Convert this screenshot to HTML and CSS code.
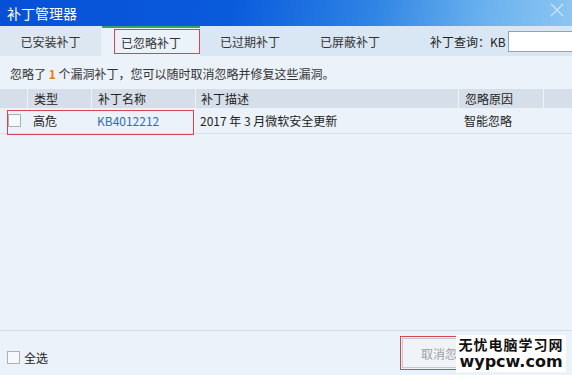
FILE: index.html
```html
<!DOCTYPE html>
<html lang="zh-CN">
<head>
  <meta charset="UTF-8">
  <title>补丁管理器</title>
  <link rel="stylesheet" href="styles.css">
</head>
<body>
  <div class="ventana">
    <div class="titulo">
      <span>补丁管理器</span>
      <svg class="cerrar" width="14" height="14" viewBox="0 0 14 14">
        <path d="M1 1 L13 13 M13 1 L1 13" stroke="#cfe6fb" stroke-width="1.2" fill="none"/>
      </svg>
    </div>

    <div class="pestanas">
      <div class="pestana">已安装补丁</div>
      <div class="pestana activa">已忽略补丁</div>
      <div class="pestana">已过期补丁</div>
      <div class="pestana">已屏蔽补丁</div>
      <div class="buscar">补丁查询：KB<input type="text"></div>
    </div>

    <div class="contenido">
      <p class="aviso">忽略了 <b>1</b> 个漏洞补丁，您可以随时取消忽略并修复这些漏洞。</p>
      <div class="tabla">
        <div class="fila cabecera">
          <div class="c-check"></div>
          <div class="c-tipo">类型</div>
          <div class="c-nombre">补丁名称</div>
          <div class="c-desc">补丁描述</div>
          <div class="c-razon">忽略原因</div>
          <div class="c-resto"></div>
        </div>
        <div class="fila">
          <div class="c-check"><span class="caja"></span></div>
          <div class="c-tipo">高危</div>
          <div class="c-nombre"><a href="#">KB4012212</a></div>
          <div class="c-desc">2017 年 3 月微软安全更新</div>
          <div class="c-razon">智能忽略</div>
          <div class="c-resto"></div>
        </div>
      </div>
    </div>

    <div class="pie">
      <label class="todo"><span class="caja"></span>全选</label>
      <button class="boton">取消忽略</button>
    </div>

    <!-- marcas rojas y marca de agua -->
    <div class="marca m-tab"></div>
    <div class="marca m-fila"></div>
    <div class="marca m-boton"></div>
    <div class="agua">
      <div class="agua-1">无忧电脑学习网</div>
      <div class="agua-2">wypcw.com</div>
    </div>
  </div>
</body>
</html>
```

FILE: styles.css
```css
body {
  margin: 0;
  overflow: hidden;
  font-family: "Noto Sans CJK SC", "Noto Sans", sans-serif;
  font-size: 12px;
  color: #222;
}

.ventana {
  position: relative;
  width: 572px;
  height: 375px;
  background: #ebf2fa;
  display: flex;
  flex-direction: column;
}

.titulo {
  height: 26px;
  display: flex;
  align-items: center;
  justify-content: space-between;
  padding: 0 8px 0 7px;
  color: #fff;
  font-size: 14px;
  background: linear-gradient(100deg, #0650d8 0%, #0a5adc 40%, #2f84e4 65%, #6cb2ee 85%, #8cc6f2 100%);
}

.cerrar {
  margin-top: -6px;
}

.pestanas {
  height: 30px;
  display: flex;
  align-items: stretch;
  background: #d9e6f4;
}

.pestana {
  width: 100px;
  flex-shrink: 0;
  display: flex;
  align-items: center;
  justify-content: center;
  color: #333;
}

.pestana:first-child {
  width: 101px;
  background: #dce7f2;
  border-right: 1px solid #e6eef7;
}

.pestana.activa {
  width: 98px;
  background: #ebf2fa;
  border-top: 2px solid #3ca35a;
}

.buscar {
  margin-left: 30px;
  display: flex;
  align-items: center;
  gap: 2px;
  white-space: nowrap;
  color: #222;
}

.buscar input {
  width: 66px;
  height: 19px;
  margin: 0;
  padding: 0;
  border: 1px solid #8aa3bf;
  background: #fff;
  flex-shrink: 0;
}

.contenido {
  flex: 1;
}

.aviso {
  margin: 0;
  padding: 9px 0 0 10px;
  height: 24px;
  line-height: 18px;
  color: #333;
}

.aviso b {
  color: #f07a00;
}

.tabla {
  display: flex;
  flex-direction: column;
}

.fila {
  display: flex;
  height: 25px;
  align-items: center;
  border-bottom: 1px solid #d7e0ea;
}

.fila.cabecera {
  height: 19px;
  background: #d6dfe9;
  border-bottom: none;
}

.fila > div {
  height: 100%;
  display: flex;
  align-items: center;
  padding-left: 6px;
  box-sizing: border-box;
}

.cabecera > div + div {
  border-left: 1px solid #eef3f8;
}

.c-check { width: 27px; padding-left: 8px !important; }
.c-tipo { width: 64px; }
.c-nombre { width: 104px; }
.c-desc { width: 263px; padding-left: 5px !important; }
.c-razon { width: 85px; }
.c-resto { flex: 1; }

.c-nombre a {
  color: #2a6fc2;
  text-decoration: none;
}

.caja {
  display: inline-block;
  width: 11px;
  height: 11px;
  border: 1px solid #a8b0ba;
  background: #f6f8fb;
}

.pie {
  height: 44px;
  border-top: 1px solid #d3dde8;
  display: flex;
  align-items: center;
  justify-content: space-between;
  padding: 0 90px 0 7px;
}

.todo {
  display: flex;
  align-items: center;
  gap: 4px;
  margin-top: 8px;
  color: #222;
}

.boton {
  width: 80px;
  height: 30px;
  border: 1px solid #c3cad2;
  background: #f1f4f7;
  color: #9aa0a6;
  font-family: inherit;
  font-size: 12px;
  text-align: left;
  padding-left: 18px;
}

/* anotaciones encima */
.marca {
  position: absolute;
  border: 1px solid #d64550;
}

.m-tab { left: 114px; top: 29px; width: 84px; height: 23px; }
.m-fila { left: 7px; top: 110px; width: 185px; height: 23px; }
.m-boton { left: 400px; top: 336px; width: 82px; height: 32px; }

.agua {
  position: absolute;
  left: 456px;
  top: 335px;
  width: 110px;
  height: 37px;
  background: #fff;
  font-weight: bold;
  color: #111;
  text-align: center;
  white-space: nowrap;
}

.agua-1 {
  font-size: 14px;
  line-height: 18px;
  letter-spacing: 1px;
}

.agua-2 {
  font-family: "DejaVu Sans", sans-serif;
  font-size: 16px;
  line-height: 17px;
}
```
